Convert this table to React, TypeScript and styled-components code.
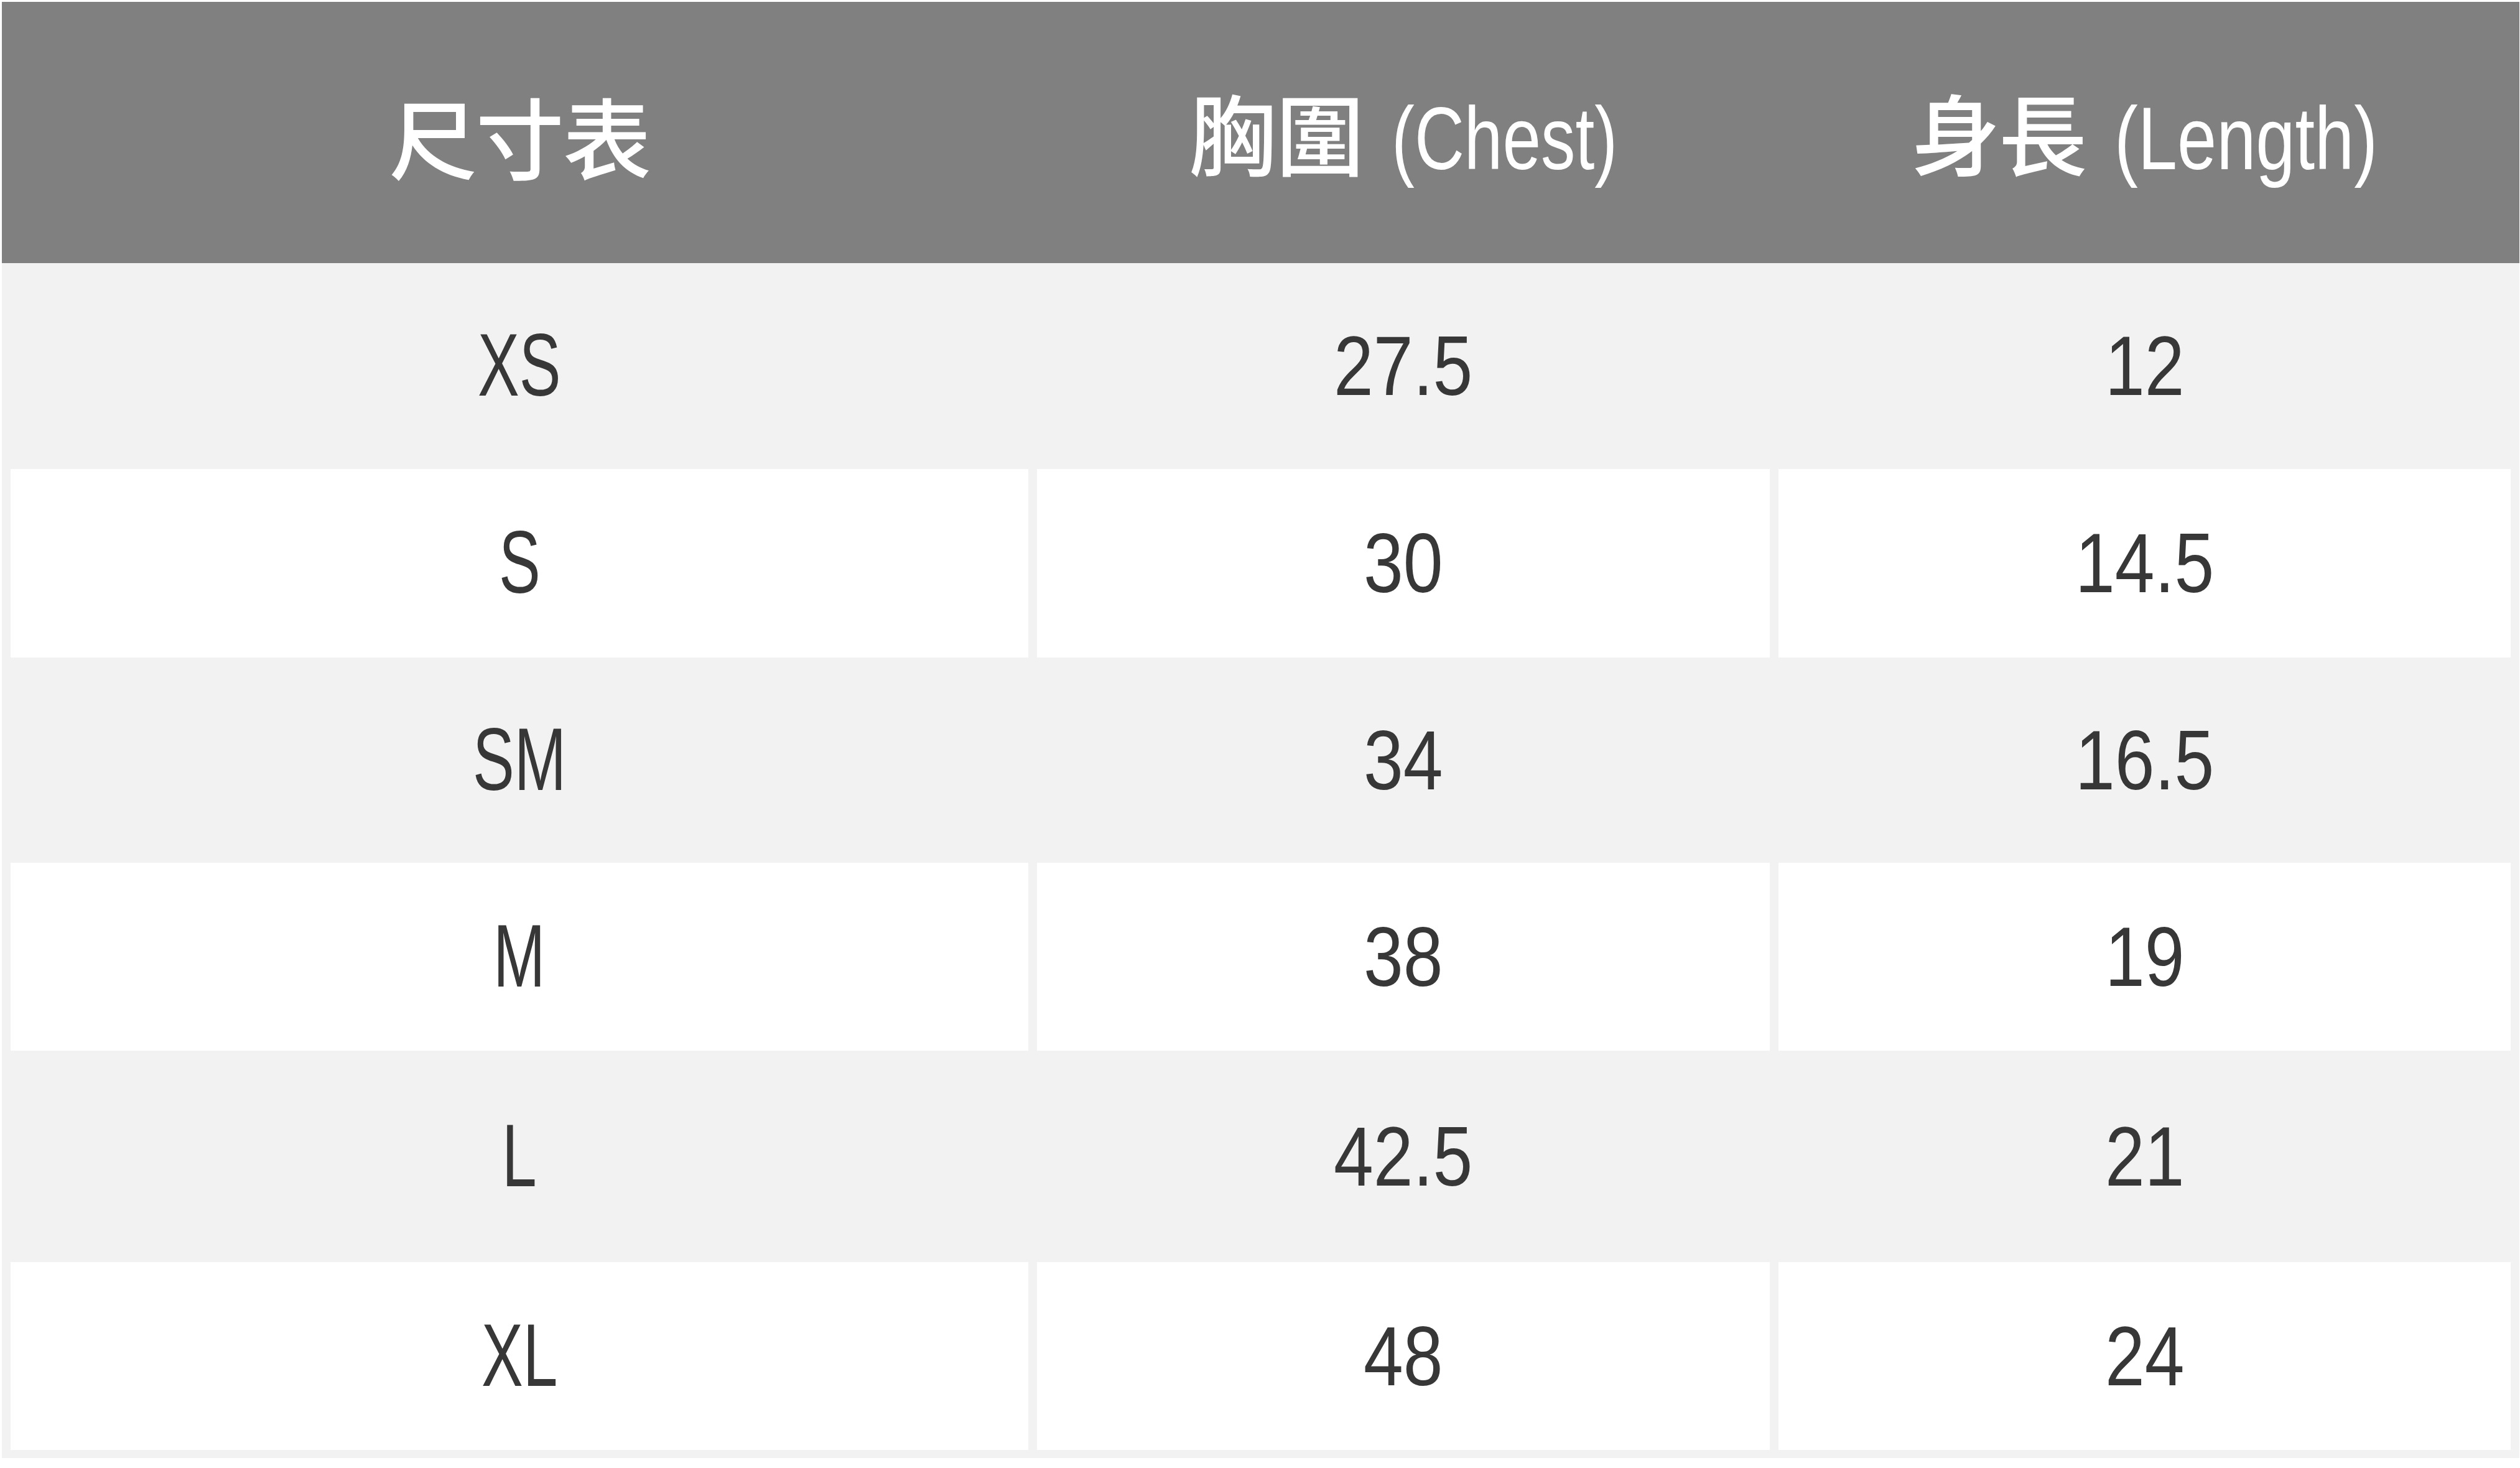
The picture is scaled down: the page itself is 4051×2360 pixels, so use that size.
import { useLayoutEffect, useRef, useState, type ReactNode } from "react";
import styled, { createGlobalStyle } from "styled-components";

const GlobalStyle = createGlobalStyle`
  html, body {
    margin: 0;
    padding: 0;
    background: #ffffff;
  }
`;

const COLUMNS = "1636px 1178px 1177px";

const Table = styled.div`
  width: 4047px;
  margin: 3px 0 0 3px;
  background-color: #f2f2f2;
  display: flex;
  flex-direction: column;
`;

const HeaderRow = styled.div`
  display: grid;
  grid-template-columns: ${COLUMNS};
  column-gap: 14px;
  padding: 0 14px;
  height: 420px;
  background-color: #808080;
  color: #ffffff;
`;

const HeaderCell = styled.div`
  display: flex;
  align-items: center;
  justify-content: center;
`;

const HeaderLabel = styled.div`
  display: flex;
  align-items: baseline;
  gap: 46px;
  line-height: 1;
  margin-top: 6px;
`;

const Hanzi = styled.span`
  font-family: "Noto Sans CJK TC", "Noto Sans CJK SC", sans-serif;
  font-size: 142px;
  font-weight: 500;
  letter-spacing: -2px;
`;

const Latin = styled.span`
  font-family: "Liberation Sans", Arial, sans-serif;
  font-size: 142px;
`;

const Row = styled.div<{ $height: number }>`
  display: grid;
  grid-template-columns: ${COLUMNS};
  column-gap: 14px;
  padding: 0 14px;
  height: ${(p) => p.$height}px;
`;

const Cell = styled.div<{ $white: boolean }>`
  display: flex;
  align-items: center;
  justify-content: center;
  background-color: ${(p) => (p.$white ? "#ffffff" : "transparent")};
  color: #373737;
  font-family: "Liberation Sans", Arial, sans-serif;
  line-height: 1;
`;

const SizeText = styled.span`
  font-size: 143px;
  margin-top: -4px;
`;

const NumberText = styled.span`
  font-size: 135px;
`;

const BottomEdge = styled.div`
  height: 13px;
`;

const SqueezeBox = styled.span`
  display: inline-block;
  white-space: nowrap;
`;

const SqueezeInner = styled.span<{ $k: number }>`
  display: inline-block;
  transform: scaleX(${(p) => p.$k});
  transform-origin: left center;
`;

// narrow the latin glyphs the way the condensed face in the picture does
function Squeeze({ k, children }: { k: number; children: ReactNode }) {
  const ref = useRef<HTMLSpanElement>(null);
  const [width, setWidth] = useState<number | null>(null);

  useLayoutEffect(() => {
    const measure = () => {
      if (ref.current) setWidth(ref.current.offsetWidth * k);
    };
    measure();
    document.fonts?.ready.then(measure);
  }, [k]);

  return (
    <SqueezeBox style={width ? { width } : undefined}>
      <SqueezeInner ref={ref} $k={k}>
        {children}
      </SqueezeInner>
    </SqueezeBox>
  );
}

const rows = [
  { size: "XS", chest: "27.5", length: "12", height: 331 },
  { size: "S", chest: "30", length: "14.5", height: 303 },
  { size: "SM", chest: "34", length: "16.5", height: 330 },
  { size: "M", chest: "38", length: "19", height: 302 },
  { size: "L", chest: "42.5", length: "21", height: 340 },
  { size: "XL", chest: "48", length: "24", height: 302 },
];

export default function App() {
  return (
    <>
      <GlobalStyle />
      <Table>
        <HeaderRow>
          <HeaderCell>
            <HeaderLabel>
              <Hanzi>尺寸表</Hanzi>
            </HeaderLabel>
          </HeaderCell>
          <HeaderCell>
            <HeaderLabel>
              <Hanzi>胸圍</Hanzi>
              <Latin>
                <Squeeze k={0.78}>(Chest)</Squeeze>
              </Latin>
            </HeaderLabel>
          </HeaderCell>
          <HeaderCell>
            <HeaderLabel>
              <Hanzi>身長</Hanzi>
              <Latin>
                <Squeeze k={0.8}>(Length)</Squeeze>
              </Latin>
            </HeaderLabel>
          </HeaderCell>
        </HeaderRow>

        {rows.map((row, i) => {
          const white = i % 2 === 1;
          return (
            <Row key={row.size} $height={row.height}>
              <Cell $white={white}>
                <SizeText>
                  <Squeeze k={0.7}>{row.size}</Squeeze>
                </SizeText>
              </Cell>
              <Cell $white={white}>
                <NumberText>
                  <Squeeze k={0.85}>{row.chest}</Squeeze>
                </NumberText>
              </Cell>
              <Cell $white={white}>
                <NumberText>
                  <Squeeze k={0.85}>{row.length}</Squeeze>
                </NumberText>
              </Cell>
            </Row>
          );
        })}

        <BottomEdge />
      </Table>
    </>
  );
}
